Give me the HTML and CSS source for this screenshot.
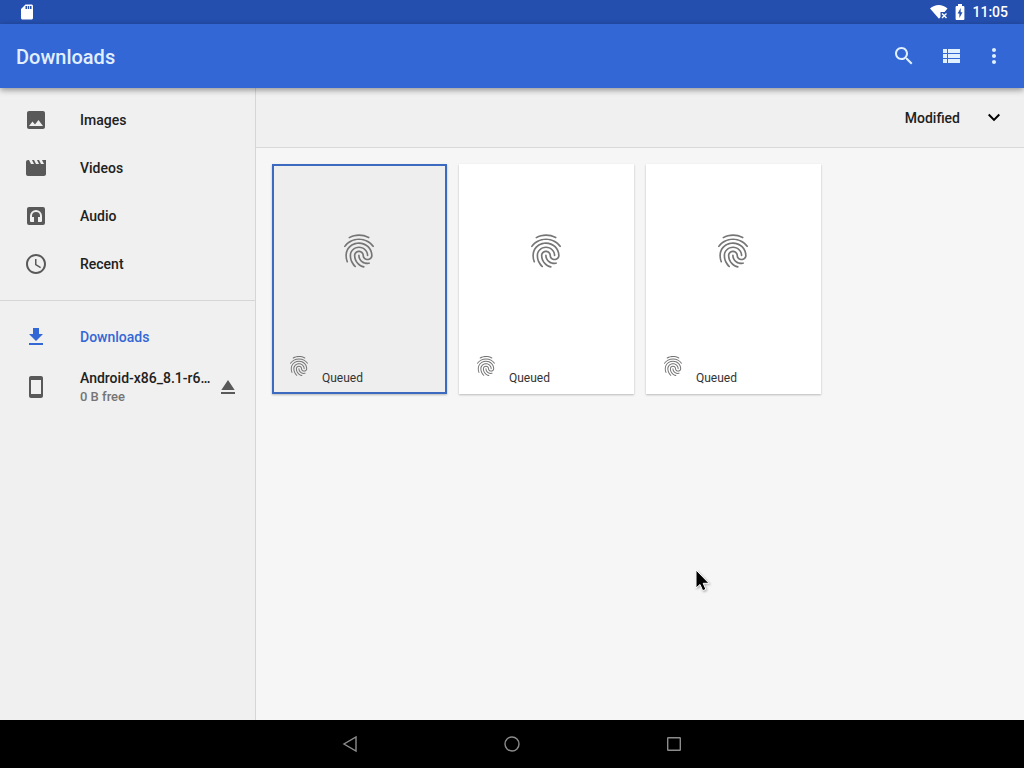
FILE: index.html
```html
<!DOCTYPE html>
<html lang="en">
<head>
<meta charset="utf-8">
<meta name="viewport" content="width=device-width, initial-scale=1">
<title>Downloads</title>
<link rel="stylesheet" href="styles.css">
</head>
<body>
<svg class="sprite" aria-hidden="true">
  <symbol id="fingerprint" viewBox="0 0 24 24"><path d="M17.81 4.47c-.08 0-.16-.02-.23-.06C15.66 3.42 14 3 12.01 3c-1.98 0-3.86.47-5.57 1.41-.24.13-.54.04-.68-.2-.13-.24-.04-.55.2-.68C7.82 2.52 9.86 2 12.01 2c2.13 0 3.99.47 6.03 1.52.25.13.34.43.21.67-.09.18-.26.28-.44.28zM3.5 9.72c-.1 0-.2-.03-.29-.09-.23-.16-.28-.47-.12-.7.99-1.4 2.25-2.5 3.75-3.27C9.98 4.04 14 4.03 17.15 5.65c1.5.77 2.76 1.86 3.75 3.25.16.22.11.54-.12.7-.23.16-.54.11-.7-.12-.9-1.26-2.04-2.25-3.39-2.94-2.87-1.47-6.54-1.47-9.4.01-1.36.7-2.5 1.7-3.4 2.96-.08.14-.23.21-.39.21zm6.25 12.07c-.13 0-.26-.05-.35-.15-.87-.87-1.34-1.43-2.01-2.64-.69-1.23-1.05-2.73-1.05-4.34 0-2.97 2.54-5.39 5.66-5.39s5.66 2.42 5.66 5.39c0 .28-.22.5-.5.5s-.5-.22-.5-.5c0-2.42-2.09-4.39-4.66-4.39-2.57 0-4.66 1.97-4.66 4.39 0 1.44.32 2.77.93 3.85.64 1.15 1.08 1.64 1.85 2.42.19.2.19.51 0 .71-.11.1-.24.15-.37.15zm7.17-1.85c-1.19 0-2.24-.3-3.1-.89-1.49-1.01-2.38-2.65-2.38-4.39 0-.28.22-.5.5-.5s.5.22.5.5c0 1.41.72 2.74 1.94 3.56.71.48 1.54.71 2.54.71.24 0 .64-.03 1.04-.1.27-.05.53.13.58.41.05.27-.13.53-.41.58-.57.11-1.07.12-1.21.12zM14.91 22c-.04 0-.09-.01-.13-.02-1.59-.44-2.63-1.03-3.72-2.1-1.4-1.39-2.17-3.24-2.17-5.22 0-1.62 1.38-2.94 3.08-2.94 1.7 0 3.08 1.32 3.08 2.94 0 1.07.93 1.94 2.08 1.94s2.08-.87 2.08-1.94c0-3.77-3.25-6.83-7.25-6.83-2.84 0-5.44 1.58-6.61 4.03-.39.81-.59 1.76-.59 2.8 0 .78.07 2.01.67 3.61.1.26-.03.55-.29.64-.26.1-.55-.04-.64-.29-.49-1.31-.73-2.61-.73-3.96 0-1.2.23-2.29.68-3.24 1.33-2.79 4.28-4.6 7.51-4.6 4.55 0 8.25 3.51 8.25 7.83 0 1.62-1.38 2.94-3.08 2.94s-3.08-1.32-3.08-2.94c0-1.07-.93-1.94-2.08-1.94s-2.08.87-2.08 1.94c0 1.71.66 3.31 1.87 4.51.95.94 1.86 1.46 3.27 1.85.27.07.42.35.35.61-.05.23-.26.38-.47.38z"/></symbol>
</svg>
<div class="screen">
  <div class="status-bar">
    <svg class="status-icon" viewBox="0 0 24 24"><path fill-rule="evenodd" d="M18 2h-8L4 8v12c0 1.100.9 2 2 2h12c1.100 0 2-.9 2-2V4c0-1.100-.9-2-2-2zm-6 6h-2V4h2v4zm3 0h-2V4h2v4zm3 0h-2V4h2v4z"/></svg>
    <div class="status-right">
      <svg class="status-wifi" viewBox="0 0 18 16"><path d="M0 4.500C5-.2 12.500-.2 17.500 4.500L14.500 8h-4v5L9 14.800z"/><path class="stroke" d="M12 9.500l4.500 4.500M16.500 9.500L12 14"/></svg>
      <svg class="status-battery" viewBox="0 0 10 16"><path fill-rule="evenodd" d="M3 0h4v2h1.500c.5 0 .9.400.9.900v12.200c0 .5-.4.900-.9.900h-7c-.5 0-.9-.4-.9-.9V2.900c0-.5.400-.9.900-.9H3zM5.700 4L2.600 9.500h1.800V14l3.100-5.800H5.700z"/></svg>
      <time class="clock">11:05</time>
    </div>
  </div>
  <header class="app-bar">
    <h1 class="app-title">Downloads</h1>
    <div class="actions">
      <button class="icon-button" type="button" aria-label="Search"><svg class="icon" viewBox="0 0 24 24"><path d="M15.500 14h-.79l-.28-.27C15.410 12.590 16 11.110 16 9.500 16 5.910 13.090 3 9.500 3S3 5.910 3 9.500 5.910 16 9.500 16c1.610 0 3.090-.59 4.230-1.570l.27.28v.79l5 4.990L20.490 19l-4.990-5zm-6 0C7.010 14 5 11.990 5 9.500S7.010 5 9.500 5 14 7.010 14 9.500 11.990 14 9.500 14z"/></svg></button>
      <button class="icon-button" type="button" aria-label="List view"><svg class="icon" viewBox="0 0 24 24"><path d="M3 14h4v-4H3v4zm0 5h4v-4H3v4zM3 9h4V5H3v4zm5 5h12v-4H8v4zm0 5h12v-4H8v4zM8 5v4h12V5H8z"/></svg></button>
      <button class="icon-button narrow" type="button" aria-label="More options"><svg class="icon" viewBox="0 0 24 24"><path d="M12 8c1.100 0 2-.9 2-2s-.9-2-2-2-2 .9-2 2 .9 2 2 2zm0 2c-1.100 0-2 .9-2 2s.9 2 2 2 2-.9 2-2-.9-2-2-2zm0 6c-1.100 0-2 .9-2 2s.9 2 2 2 2-.9 2-2-.9-2-2-2z"/></svg></button>
    </div>
  </header>
  <div class="content">
    <nav class="sidebar" aria-label="Storage">
      <div class="nav-group">
        <a class="nav-item" href="#images"><svg class="icon" viewBox="0 0 24 24"><path d="M21 19V5c0-1.100-.9-2-2-2H5c-1.100 0-2 .9-2 2v14c0 1.100.9 2 2 2h14c1.100 0 2-.9 2-2zM8.500 13.500l2.500 3.010L14.500 12l4.500 6H5l3.500-4.500z"/></svg><span class="nav-label">Images</span></a>
        <a class="nav-item" href="#videos"><svg class="icon" viewBox="0 0 24 24"><path d="M18 4l2 4h-3l-2-4h-2l2 4h-3l-2-4H8l2 4H7L5 4H4c-1.100 0-1.990.9-1.990 2L2 18c0 1.100.9 2 2 2h16c1.100 0 2-.9 2-2V4h-4z"/></svg><span class="nav-label">Videos</span></a>
        <a class="nav-item" href="#audio"><svg class="icon" viewBox="0 0 24 24"><path fill-rule="evenodd" d="M5 3h14a2 2 0 0 1 2 2v14a2 2 0 0 1-2 2H5a2 2 0 0 1-2-2V5c0-1.100.9-2 2-2zm7 3a6 6 0 0 0-6 6v5a1 1 0 0 0 1 1h3v-5H8v-1a4 4 0 0 1 8 0v1h-2v5h3a1 1 0 0 0 1-1v-5a6 6 0 0 0-6-6z"/></svg><span class="nav-label">Audio</span></a>
        <a class="nav-item" href="#recent"><svg class="icon" viewBox="0 0 24 24"><path d="M11.990 2C6.470 2 2 6.480 2 12s4.470 10 9.990 10C17.520 22 22 17.520 22 12S17.520 2 11.990 2zM12 20c-4.420 0-8-3.580-8-8s3.580-8 8-8 8 3.580 8 8-3.580 8-8 8zm.5-13H11v6l5.250 3.150.75-1.230-4.500-2.670z"/></svg><span class="nav-label">Recent</span></a>
      </div>
      <div class="nav-group">
        <a class="nav-item active" href="#downloads" aria-current="page"><svg class="icon" viewBox="0 0 24 24"><path d="M19 9h-4V3H9v6H5l7 7 7-7zM5 18v2h14v-2H5z"/></svg><span class="nav-label">Downloads</span></a>
        <div class="device-row">
          <a class="nav-item device" href="#device"><svg class="icon" viewBox="0 0 24 24"><path d="M17 1.010L7 1c-1.100 0-2 .9-2 2v18c0 1.100.9 2 2 2h10c1.100 0 2-.9 2-2V3c0-1.100-.9-1.990-2-1.990zM17 19H7V5h10v14z"/></svg><span class="nav-text"><span class="nav-label">Android-x86_8.1-r6…</span><span class="nav-detail">0 B free</span></span></a>
          <button class="eject" type="button" aria-label="Eject"><svg class="icon" viewBox="0 0 24 24"><path d="M5 17h14v2H5zm7-12L5.330 15h13.340z"/></svg></button>
        </div>
      </div>
    </nav>
    <main class="main">
      <div class="sort-bar">
        <button class="sort" type="button"><span>Modified</span><svg class="icon" viewBox="0 0 24 24"><path d="M7.410 7.840L12 12.420l4.590-4.580L18 9.250l-6 6-6-6z"/></svg></button>
      </div>
      <div class="grid">
        <article class="card selected">
          <div class="thumb"><svg class="print-large"><use href="#fingerprint"/></svg></div>
          <div class="caption"><svg class="print-small"><use href="#fingerprint"/></svg><span class="state">Queued</span></div>
        </article>
        <article class="card">
          <div class="thumb"><svg class="print-large"><use href="#fingerprint"/></svg></div>
          <div class="caption"><svg class="print-small"><use href="#fingerprint"/></svg><span class="state">Queued</span></div>
        </article>
        <article class="card">
          <div class="thumb"><svg class="print-large"><use href="#fingerprint"/></svg></div>
          <div class="caption"><svg class="print-small"><use href="#fingerprint"/></svg><span class="state">Queued</span></div>
        </article>
      </div>
    </main>
  </div>
  <footer class="system-nav">
    <button class="system-button" type="button" aria-label="Back"><svg class="icon" viewBox="0 0 24 24"><path d="M18 5v14L6 12z"/></svg></button>
    <button class="system-button" type="button" aria-label="Home"><svg class="icon" viewBox="0 0 24 24"><circle cx="12" cy="12" r="7"/></svg></button>
    <button class="system-button" type="button" aria-label="Overview"><svg class="icon" viewBox="0 0 24 24"><rect x="5.700" y="5.700" width="12.600" height="12.600" rx=".5"/></svg></button>
  </footer>
  <svg class="pointer" viewBox="0 0 18 26" aria-hidden="true"><path d="M2 2v18l4-3.500 2.700 6.200 3.200-1.400-2.700-6H15z"/></svg>
</div>
</body>
</html>
```
FILE: styles.css
```css
* { box-sizing: border-box; }

body {
  margin: 0;
  font-family: Roboto, "Noto Sans", sans-serif;
  font-size: 14px;
  font-weight: 500;
  line-height: 20px;
  color: #212121;
}

button {
  margin: 0;
  padding: 0;
  border: 0;
  background: none;
  font: inherit;
  color: inherit;
}

svg { display: block; flex: none; fill: currentColor; }

.sprite { display: none; }

.icon { width: 24px; height: 24px; }

.screen {
  position: relative;
  display: flex;
  flex-direction: column;
  min-height: 100vh;
  background: #f6f6f6;
}

.status-bar {
  display: flex;
  align-items: center;
  justify-content: space-between;
  height: 24px;
  padding: 0 16px 0 18px;
  background: #244fae;
  color: #fff;
}

.status-icon { width: 18px; height: 18px; }

.status-right { display: flex; align-items: center; }

.status-wifi { width: 18px; height: 16px; margin-right: 7px; }

.status-wifi .stroke { fill: none; stroke: currentColor; stroke-width: 1.400; }

.status-battery { width: 10px; height: 16px; margin-right: 7px; }

.app-bar {
  position: relative;
  z-index: 1;
  display: flex;
  align-items: center;
  justify-content: space-between;
  height: 64px;
  padding: 0 12px 0 16px;
  background: #3367d6;
  box-shadow: 0 2px 6px rgba(0, 0, 0, .4);
  color: #e1f0ff;
}

.app-title { margin: 0; padding-top: 2px; font-size: 20px; font-weight: 500; line-height: 28px; }

.actions { display: flex; }

.icon-button {
  display: grid;
  place-items: center;
  width: 48px;
  height: 48px;
}

.icon-button.narrow { width: 36px; }

.content { display: flex; flex: 1; }

.sidebar {
  flex: none;
  width: 256px;
  padding-top: 8px;
  border-right: 1px solid #d6d6d6;
  background: #f0f0f0;
}

.nav-group + .nav-group {
  margin-top: 12px;
  padding-top: 12px;
  border-top: 1px solid #d6d6d6;
}

.nav-item {
  display: flex;
  align-items: center;
  gap: 32px;
  height: 48px;
  padding: 0 24px;
  color: inherit;
  text-decoration: none;
}

.nav-item .icon, .eject .icon { color: #595959; }

.nav-item.active, .nav-item.active .icon { color: #3367d6; }

.device-row { display: flex; align-items: center; height: 52px; }

.nav-item.device { flex: 1; min-width: 0; padding-right: 3px; }

.nav-text { display: flex; flex-direction: column; min-width: 0; }

.nav-text .nav-label { white-space: nowrap; }

.nav-detail { font-size: 13px; line-height: 18px; color: #757575; }

.eject { margin-right: 15px; }

.main { flex: 1; min-width: 0; }

.sort-bar {
  display: flex;
  align-items: center;
  justify-content: flex-end;
  height: 60px;
  padding: 0 18px;
  border-bottom: 1px solid #d9d9d9;
  background: #f0f0f0;
}

.sort { display: flex; align-items: center; gap: 22px; }

.sort .icon { color: #000; }

.grid {
  display: grid;
  grid-template-columns: repeat(auto-fill, 175px);
  gap: 12px;
  padding: 16px;
}

.card {
  display: flex;
  flex-direction: column;
  background: #fff;
  box-shadow: 0 1px 2px rgba(0, 0, 0, .25);
  color: #757575;
}

.card.selected {
  outline: 2px solid #3b6ac0;
  outline-offset: -2px;
  background: #eee;
}

.thumb { display: grid; place-items: center; height: 174px; padding-right: 1px; }

.print-large { width: 40px; height: 40px; }

.print-small { width: 24px; height: 24px; }

.caption {
  display: flex;
  align-items: flex-start;
  gap: 11px;
  height: 56px;
  padding: 16px 15px 0;
}

.state {
  padding-top: 16px;
  font-size: 12px;
  font-weight: 400;
  line-height: 16px;
  color: #333;
}

.system-nav {
  display: flex;
  align-items: center;
  justify-content: center;
  height: 48px;
  background: #000;
}

.system-button { display: grid; place-items: center; width: 162px; height: 48px; }

.system-button .icon { fill: none; stroke: #8c8c8c; stroke-width: 1.400; }

.pointer {
  position: absolute;
  top: 568px;
  left: 694px;
  width: 18px;
  height: 26px;
  stroke: #fff;
  stroke-width: 1;
  fill: #000;
  filter: drop-shadow(1px 1px 1px rgba(0, 0, 0, .3));
}
```
